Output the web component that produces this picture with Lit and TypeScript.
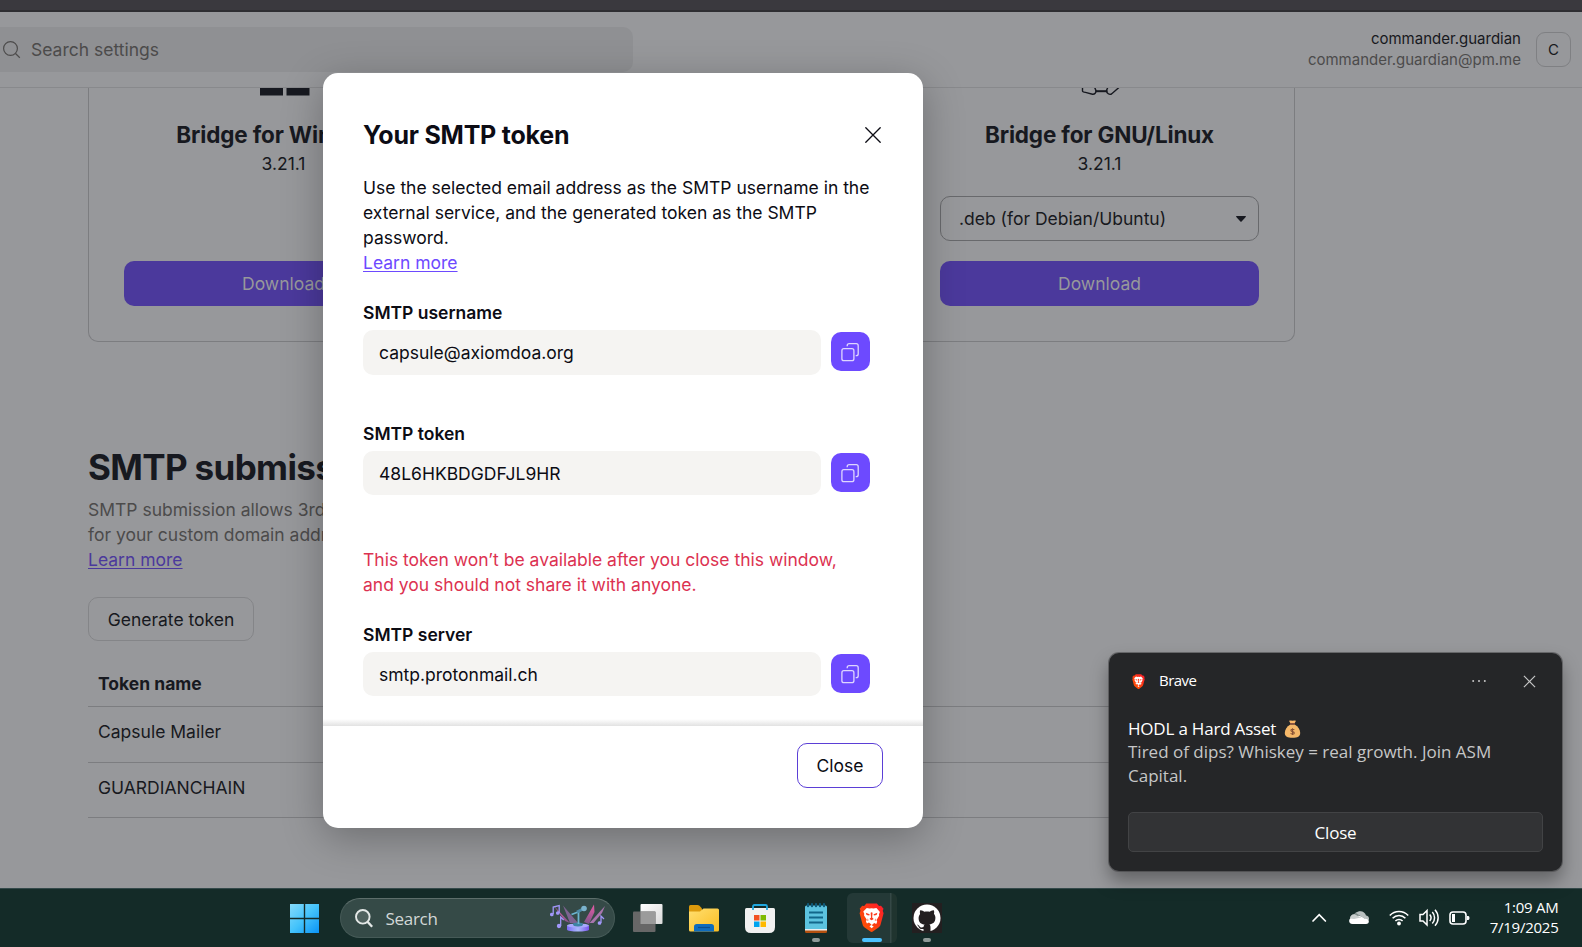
import { LitElement, html, css } from "lit";
import { customElement, property } from "lit/decorators.js";

const copyIcon = html`<svg width="39" height="39" viewBox="0 0 39 39" fill="none" stroke="#ded6ff" stroke-width="1.3">
  <rect x="10.900" y="16.700" width="12" height="12" rx="2" />
  <path d="M16.200 14.200v-.5a2 2 0 0 1 2-2h7a2 2 0 0 1 2 2v8a2 2 0 0 1-2 2h-.5" />
</svg>`;

const lionShield = (size: number) => html`<svg width=${size * 0.84} height=${size} viewBox="0 0 26 31">
  <defs><linearGradient id="g" x1="0" y1="1" x2="1" y2="0"><stop offset="0" stop-color="#ff5a00" /><stop offset=".5" stop-color="#fb3b12" /><stop offset="1" stop-color="#ff1a2e" /></linearGradient></defs>
  <path fill="url(#g)" d="M7.600.6h10.800l2.300 2.600 2-.3 2.600 3.100-.8 2 .9 2.600-3.100 11.600c-.4 1.400-1 2.200-2.100 3l-5.600 4.100c-1 .8-2.200.8-3.200 0l-5.600-4.100c-1.100-.8-1.700-1.600-2.100-3L.6 10.600l.9-2.600-.8-2 2.600-3.100 2 .3z" />
  <path fill="#fff" d="M8 5.200l3 .6 2-.4 2 .4 3-.6 3.600 4-1 2.300.2 1.800-2.700 4.200.7 2-1 2.200-2.100-1.100-2.700 2.300 2.200 1.500L13 26l-2.200-2.100 2.200-1.500-2.700-2.300-2.100 1.100-1-2.200.7-2-2.700-4.200.2-1.800-1-2.300z" />
  <path fill="#fb3a1c" d="M7 10.200l4 1.500-.4 1.100-2.800-.5zM19 10.200l-4 1.500.4 1.100 2.800-.5zM12 10l1-.4 1 .4-.4 5 1.600 1.500-2.200 1.400-2.200-1.400 1.600-1.500zM9 15.800l.8 2-1.100.7zM17 15.800l-.8 2 1.100.7z" />
</svg>`;

@customElement("copy-field")
class CopyField extends LitElement {
  @property() label = "";
  @property() value = "";
  static styles = css`
    :host { display: block; }
    .label { font-weight: 600; line-height: 25px; color: #0c0c14; }
    .row { display: flex; gap: 10px; margin-top: 5px; }
    .value { box-sizing: border-box; width: 458px; height: 44.5px; line-height: 45px; padding-left: 16px; border-radius: 10px; background: #f5f4f2; color: #0c0c14; }
    .copy { width: 39px; height: 39px; margin-top: 2px; border-radius: 10px; background: #6d4aff; display: grid; place-items: center; }
  `;
  render() {
    return html`<div class="label">${this.label}</div>
      <div class="row"><div class="value">${this.value}</div><div class="copy">${copyIcon}</div></div>`;
  }
}

@customElement("settings-page")
class SettingsPage extends LitElement {
  static styles = css`
    :host { display: block; height: 888px; overflow: hidden; background: #97989b; color: #171920; }
    .strip { height: 10px; background: #3a393e; border-bottom: 2px solid #2e2e32; }
    .header { display: flex; justify-content: space-between; height: 75px; border-bottom: 1px solid #88898c; }
    .search { display: flex; align-items: center; width: 633px; height: 45px; margin-top: 15px; background: #8f9093; border-radius: 0 10px 10px 0; color: #4c4b4b; }
    .search svg { margin: 0 10.5px 0 2.5px; }
    .user { display: flex; padding-right: 11px; margin-top: 15px; }
    .names { text-align: right; font-size: 15px; line-height: 21px; margin: 1px 15px 0 0; }
    .mail { color: #4c4b4b; }
    .avatar { box-sizing: border-box; width: 35px; height: 35px; margin-top: 5px; border: 1px solid #7f8083; border-radius: 9px; text-align: center; line-height: 34px; font-size: 15px; }
    .card { box-sizing: border-box; width: 1207px; height: 254px; margin-left: 88px; padding: 0 35px; border: 1px solid #7c7d80; border-top: 0; border-radius: 0 0 10px 10px; display: grid; grid-template-columns: repeat(3, 319px); column-gap: 89px; }
    .col { display: flex; flex-direction: column; align-items: center; height: 218px; }
    .logo { height: 32px; padding-left: 2px; }
    .name { font-size: 22.5px; font-weight: 700; line-height: 30px; letter-spacing: -0.15px; }
    .ver { line-height: 25px; margin-top: 1px; }
    .pick { box-sizing: border-box; width: 100%; height: 45px; margin-top: 20px; padding: 0 12px 0 18px; border: 1px solid #68696c; border-radius: 10px; display: flex; justify-content: space-between; align-items: center; }
    .btn { width: 100%; height: 45px; line-height: 45px; margin-top: auto; border-radius: 10px; background: #4b399c; color: #97989b; text-align: center; }
    .section { margin: 105px 0 0 88px; width: 1207px; line-height: 25px; }
    h2 { margin: 0; font-size: 35px; font-weight: 700; line-height: 41px; letter-spacing: -0.65px; }
    .muted { color: #4c4b4b; margin-top: 9px; white-space: pre; }
    .link { color: #4b399c; text-decoration: underline; text-decoration-thickness: 1px; text-underline-offset: 2px; }
    .gen { box-sizing: border-box; width: 166px; height: 44px; line-height: 43px; margin-top: 25px; border: 1px solid #848588; border-radius: 10px; text-align: center; }
    .table { margin-top: 22px; }
    .tr { box-sizing: border-box; padding-left: 10px; height: 55.5px; line-height: 50px; border-bottom: 1px solid #7c7d80; }
    .th { height: 44px; line-height: 41px; font-weight: 700; }
  `;
  render() {
    return html`
      <div class="strip"></div>
      <div class="header">
        <div class="search">
          <svg width="18" height="18" viewBox="0 0 18 18" fill="none" stroke="#4c4b4b" stroke-width="1.2"><circle cx="7.500" cy="7.500" r="6.900" /><path d="M12.500 12.500l4.300 4.200" /></svg>
          <span>Search settings</span>
        </div>
        <div class="user">
          <div class="names"><div>commander.guardian</div><div class="mail">commander.guardian@pm.me</div></div>
          <div class="avatar">C</div>
        </div>
      </div>
      <div class="card">
        <div class="col">
          <svg class="logo" width="50" height="32" viewBox="0 0 50 32"><path fill="#171920" d="M0 0h23v7.500H0zM26.500 0H49.500v7.500H26.500z" /></svg>
          <div class="name">Bridge for Windows</div>
          <div class="ver">3.21.1</div>
          <div class="btn">Download</div>
        </div>
        <div class="col"></div>
        <div class="col">
          <svg class="logo" width="40" height="32" viewBox="0 0 40 32" fill="none" stroke="#171920" stroke-width="1.4"><path d="M1.500-1v4c0 1 1.200 1.200 3 1.400l7 1.800c2.500.2 3.500-1.500 3.500-3.500L13.500-1M27-1l-1.500 3.500c0 3 3 4.500 5 3.500l8-7" /><path d="M14.500 3.200h12" stroke-width="2" /></svg>
          <div class="name">Bridge for GNU/Linux</div>
          <div class="ver">3.21.1</div>
          <div class="pick"><span>.deb (for Debian/Ubuntu)</span><svg width="10" height="6" viewBox="0 0 10 6"><path fill="#171920" d="M.5 0h9q.7.400.2 1L5.600 5.600q-.6.500-1.200 0L.3 1q-.5-.6.2-1z" /></svg></div>
          <div class="btn">Download</div>
        </div>
      </div>
      <div class="section">
        <h2>SMTP submission</h2>
        <div class="muted">SMTP submission allows 3rd-party services
for your custom domain addresses</div>
        <span class="link">Learn more</span>
        <div class="gen">Generate token</div>
        <div class="table">
          <div class="tr th">Token name</div>
          <div class="tr">Capsule Mailer</div>
          <div class="tr">GUARDIANCHAIN</div>
        </div>
      </div>`;
  }
}

@customElement("token-dialog")
class TokenDialog extends LitElement {
  static styles = css`
    :host { display: flex; flex-direction: column; box-sizing: border-box; width: 600px; height: 755px; background: #fff; color: #0c0c14; border-radius: 15px; box-shadow: 0 10px 40px rgba(0, 0, 0, 0.28); overflow: hidden; line-height: 25px; }
    .body { padding: 45px 40px 0; flex: 1; }
    .head { display: flex; justify-content: space-between; align-items: center; height: 35px; }
    h1 { margin: 0; font-size: 25px; font-weight: 700; line-height: 35px; letter-spacing: -0.22px; }
    .head svg { margin: 0 2px 2px 0; }
    p { margin: 22px 0 0; }
    .link { color: #6d4aff; text-decoration: underline; text-decoration-thickness: 1px; text-underline-offset: 2px; }
    .first { margin-top: 25px; }
    .second { margin-top: 46px; }
    .warn { color: #dc3251; margin-top: 52px; }
    .third { margin-top: 24.5px; }
    .fade { height: 7px; background: linear-gradient(#fff, #e2e2e2); }
    .foot { height: 102px; box-sizing: border-box; padding: 17px 40px 0; display: flex; justify-content: flex-end; }
    .close { box-sizing: border-box; width: 86px; height: 45px; line-height: 43px; border: 1px solid #5b3fd6; border-radius: 10px; text-align: center; }
  `;
  render() {
    return html`
      <div class="body">
        <div class="head"><h1>Your SMTP token</h1>
          <svg width="16" height="16" viewBox="0 0 16 16" stroke="#0c0c14" stroke-width="1.3" stroke-linecap="round"><path d="M.8.8l14.400 14.400M15.200.8L.8 15.200" /></svg>
        </div>
        <p>Use the selected email address as the SMTP username in the<br />external service, and the generated token as the SMTP<br />password.<br /><span class="link">Learn more</span></p>
        <copy-field class="first" label="SMTP username" value="capsule@axiomdoa.org"></copy-field>
        <copy-field class="second" label="SMTP token" value="48L6HKBDGDFJL9HR"></copy-field>
        <div class="warn">This token won’t be available after you close this window,<br />and you should not share it with anyone.</div>
        <copy-field class="third" label="SMTP server" value="smtp.protonmail.ch"></copy-field>
      </div>
      <div class="fade"></div>
      <div class="foot"><div class="close">Close</div></div>`;
  }
}

@customElement("desktop-toast")
class DesktopToast extends LitElement {
  static styles = css`
    :host { display: block; box-sizing: border-box; width: 453px; height: 218px; padding: 0 19px; border-radius: 10px; background: #252628; color: #fff; box-shadow: 0 0 0 1px rgba(60, 60, 62, 0.5), 0 10px 18px rgba(0, 0, 0, 0.35); font-family: "Open Sans", "Noto Sans", sans-serif; font-size: 17px; letter-spacing: -0.2px; }
    .top { display: flex; align-items: center; height: 55px; padding: 1px 6px 0 4px; font-size: 15px; letter-spacing: -0.55px; }
    .brand { margin: -3px 0 0 14px; flex: 1; font-weight: 500; }
    .dots { margin: -1px 37px 0 0; }
    .x { margin-right: 1px; }
    .title { display: flex; align-items: center; gap: 8px; height: 23px; margin-top: 8px; }
    .text { color: #c6c6c7; line-height: 24px; letter-spacing: 0; }
    .close { box-sizing: border-box; height: 40px; line-height: 39px; margin-top: 24px; border: 1px solid #424345; border-radius: 5px; background: #323335; text-align: center; }
  `;
  render() {
    return html`
      <div class="top">
        ${lionShield(15.5)}<span class="brand">Brave</span>
        <svg class="dots" width="14" height="4" viewBox="0 0 14 4" fill="#c6c6c7"><circle cx="1.200" cy="2" r="1" /><circle cx="7" cy="2" r="1" /><circle cx="12.800" cy="2" r="1" /></svg>
        <svg class="x" width="13" height="13" viewBox="0 0 14 14" stroke="#c6c6c7" stroke-width="1.3"><path d="M1 1l12 12M13 1L1 13" /></svg>
      </div>
      <div class="title"><span>HODL a Hard Asset</span>
        <svg width="17" height="18" viewBox="0 0 17 18"><path fill="#fbb969" d="M5 .8q1.500-.8 3.500 0 2-.8 3.500 0L10.500 3.500h-4z" /><path fill="#8a4b3c" d="M6 3.200h5v1.500H6z" /><path fill="#f5b869" d="M6 4.700h5c3 1.800 5.200 5 5.200 8.300 0 3.400-2.700 4.800-7.700 4.800S.8 16.400.8 13C.8 9.700 3 6.500 6 4.700z" /><path fill="none" stroke="#8a5335" stroke-width="1.1" d="M10.300 10c-.9-1.200-3.500-.8-3.400.5.100 1.400 3.400.9 3.400 2.500 0 1.500-2.800 1.600-3.700.3M8.500 8.300V15" /></svg>
      </div>
      <div class="text">Tired of dips? Whiskey = real growth. Join ASM<br />Capital.</div>
      <div class="close">Close</div>`;
  }
}

@customElement("task-bar")
class TaskBar extends LitElement {
  static styles = css`
    :host { display: flex; box-sizing: border-box; height: 59px; border-top: 1px solid #34494a; background: #142b28; padding-left: 290px; color: #fff; font-family: "Open Sans", "Noto Sans", sans-serif; }
    svg { display: block; flex: none; }
    .start { margin: 15px 21px 0 0; }
    .search { box-sizing: border-box; display: flex; align-items: center; width: 275px; height: 40px; margin-top: 9px; padding: 0 8px 0 14px; border: 1px solid #465a57; border-top-color: #5d6e6b; border-radius: 20px; background: #354a47; color: #d3d8d7; font-size: 17px; letter-spacing: -0.3px; }
    .search span { margin-left: 12.5px; flex: 1; }
    .slot { display: flex; flex-direction: column; align-items: center; width: 56px; box-sizing: border-box; padding-top: 14px; }
    .slots { display: flex; margin-left: 5px; }
    .dot { width: 8px; height: 4px; border-radius: 2px; background: #8f9a98; margin-top: 5px; }
    .on { width: 20px; background: #4cc2ff; }
    .tile { width: 50px; height: 50px; margin: 4px 3px 0; padding-top: 10px; border-radius: 6px; background: linear-gradient(90deg, #243937 43px, #354846 43px, #354846 44px, #20342f 45px); }
    .last { margin-left: -1px; }
    .tray { display: flex; margin-left: auto; padding-right: 23.5px; }
    .clock { font-size: 15px; line-height: 20px; letter-spacing: -0.25px; margin: 8px 0 0 18px; width: 69.5px; white-space: nowrap; display: flex; flex-direction: column; align-items: flex-end; }
  `;
  render() {
    return html`
      <svg class="start" width="29" height="29" viewBox="0 0 29 29"><defs><linearGradient id="w" gradientUnits="userSpaceOnUse" x1="0" y1="0" x2="29" y2="29"><stop offset="0" stop-color="#86dbfb" /><stop offset=".5" stop-color="#44c3fb" /><stop offset="1" stop-color="#0a93f5" /></linearGradient></defs><path fill="url(#w)" d="M0 0h13.800v13.800H0zM15.200 0H29v13.800H15.200zM0 15.200h13.800V29H0zM15.200 15.200H29V29H15.200z" /></svg>
      <div class="search">
        <svg width="18" height="19" viewBox="0 0 18 19" fill="#50625f" stroke="#e4e8e7" stroke-width="1.9"><circle cx="7.800" cy="7.800" r="6.800" /><path d="M12.500 12.800l4.700 5" stroke-width="2.4" /></svg>
        <span>Search</span>
        <svg width="56" height="28" viewBox="0 0 56 28">
          <defs><linearGradient id="a" x1="0" y1="0" x2="0" y2="1"><stop offset="0" stop-color="#e85ba8" /><stop offset="1" stop-color="#7d5487" /></linearGradient><linearGradient id="b" x1="0" y1="0" x2="1" y2="0"><stop offset="0" stop-color="#7c6bf5" /><stop offset=".5" stop-color="#a9b8fb" /><stop offset="1" stop-color="#7b55ee" /></linearGradient></defs>
          <path fill="#7d6290" d="M13 1.500L28 19h-8z" /><path fill="url(#a)" d="M4 2l16 17-5-2zM44 .500L34 18l5 2 5.500-12z" /><path fill="#a975ad" d="M55 2L39.500 19h4L52 9z" />
          <path fill="url(#b)" d="M17 21.500v4c0 2.800 22 2.800 22 0v-4z" /><ellipse cx="28" cy="21.500" rx="11" ry="2" fill="#a8a8fc" />
          <ellipse cx="28" cy="20.500" rx="5" ry="1.900" fill="#3d83a3" /><path stroke="#6cb5d0" stroke-width="1.8" d="M28.500 20V8.500M21.500 10.500l8-3" fill="none" /><path stroke="#4b89a5" stroke-width="3" d="M27 8l5-2.500" /><circle cx="34" cy="4.500" r="2.800" fill="#7bb3cd" />
          <g fill="#a297fa" stroke="#a297fa" stroke-width="1.3"><circle cx="1.800" cy="10.500" r="1.200" /><circle cx="7.800" cy="9" r="1.200" /><path fill="none" d="M3.200 10V3l6-1.500V9" /><circle cx="9" cy="22" r="1.500" /><path fill="none" d="M10.700 22v-9l3 3" /><circle cx="49.500" cy="19" r="1.200" /><path fill="none" d="M51 19v-7l3 3" /></g>
        </svg>
      </div>
      <div class="slots">
        <div class="slot"><svg width="30" height="30" viewBox="0 0 30 30"><defs><linearGradient id="t" x2="1" y2="1"><stop stop-color="#fff" /><stop offset="1" stop-color="#d9d9d9" /></linearGradient></defs><rect x="7.500" y="1" width="22" height="20" rx="1" fill="url(#t)" /><rect x="0" y="8.500" width="22.500" height="20.500" rx="1" fill="#676767" /><path fill="#9b9b9b" d="M7.500 8.500h15V21h-15z" /></svg></div>
        <div class="slot"><svg width="30" height="30" viewBox="0 0 30 30"><defs><linearGradient id="f" x2="1" y2="1"><stop stop-color="#ffdf70" /><stop offset="1" stop-color="#fbbd22" /></linearGradient></defs><path fill="#dc9a0c" d="M0 3.500Q0 2 1.500 2h7q1 0 2 .8L13 5.500V9H0z" /><path fill="url(#f)" d="M0 8.500h11l3.500-3h14Q30 5.500 30 7v20q0 1.500-1.500 1.500h-27Q0 28.500 0 27z" /><path fill="#0f6cbd" d="M5 28.500v-4.700q0-2.800 2.800-2.800h14.400q2.800 0 2.800 2.800v4.700z" /><path stroke="#0a4e8f" stroke-width="1.2" d="M9 24.500h12" /></svg></div>
        <div class="slot"><svg width="30" height="30" viewBox="0 0 30 30"><path fill="none" stroke="#20a8e0" stroke-width="1.8" d="M8 6V3.500Q8 2 9.500 2h11Q22 2 22 3.500V6" /><path fill="#f1f1f1" d="M0 6.500Q0 5 1.500 5h27Q30 5 30 6.500V24q0 6-6 6H6q-6 0-6-6z" /><path fill="none" stroke="#20a8e0" stroke-width="1.8" d="M8 5v2M22 5v2" /><path fill="#f25022" d="M9 12h5.500v5.500H9z" /><path fill="#7fba00" d="M15.500 12H21v5.500h-5.500z" /><path fill="#00a4ef" d="M9 18.500h5.500V24H9z" /><path fill="#ffb900" d="M15.500 18.500H21V24h-5.500z" /></svg></div>
        <div class="slot"><svg width="24" height="30" viewBox="0 0 24 30"><path fill="#b4500f" d="M1 24h22v4.500q0 1.500-1.500 1.500h-19Q1 30 1 28.500z" /><path fill="#e9eef0" d="M1 24h22v3.500H1z" /><path fill="#5cc3df" d="M1 4q0-1.500 1.500-1.500h19Q23 2.500 23 4v22H1z" /><path stroke="#0f5a7a" stroke-width="2.2" d="M4 1.200v2M8 1.200v2M12 1.200v2M16 1.200v2M20 1.200v2" stroke-linecap="round" /><path stroke="#12678a" stroke-width="1.8" d="M5 9.500h14M5 14.500h14M5 19.500h14" /></svg><div class="dot"></div></div>
        <div class="slot tile">${lionShield(30)}<div class="dot on"></div></div>
        <div class="slot last"><svg width="30" height="30" viewBox="0 0 30 30"><path fill="#231f20" d="M0 0h30v30H0z" /><circle cx="15" cy="15" r="13.500" fill="#fff" /><path fill="#231f20" d="M8.200 7.200c1.500-.2 3 .6 4.200 1.500 1.700-.4 3.500-.4 5.200 0 1.200-.9 2.700-1.700 4.200-1.500.5 1.200.5 2.500.1 3.600 1 1.200 1.500 2.500 1.500 4 0 4.700-2.600 6.200-6 6.700.8.800 1.100 1.700 1.100 3v4.600h-7v-3.200c-3 .6-4.200-.8-4.800-2-.5-1.200-1.100-1.700-1.800-2.200 2.400-.2 2.500 2.700 4.600 2.800.8 0 1.500-.2 2-.4.100-1 .5-1.900 1.100-2.500-3.400-.5-6-2-6-6.700 0-1.500.5-2.800 1.500-4-.4-1.200-.4-2.500.1-3.700z" /></svg><div class="dot"></div></div>
      </div>
      <div class="tray">
        <svg width="160" height="58" viewBox="1311 889 160 58" fill="none" stroke="#fff" stroke-width="1.7">
          <path d="M1313 921l6.200-6.300 6.200 6.300" stroke-linecap="round" />
          <g stroke="none"><path fill="#7f8d8b" d="M1350 919c0-3 2-4.500 4-4.500 1.500-3.500 8-4 10-.5z" /><path fill="#b9c1c0" d="M1356 913c4-3.500 9-1.500 10 2.500 3 0 4 4 2 5.500z" /><path fill="#fff" d="M1352.500 924c-4.500 0-4.500-6.500.5-6.500l5-1.500c3-1 5 2.500 7 2.700 5 0 5 5.300 1 5.300z" /><path fill="#c9cfce" d="M1350 918.500c0-3 3-5 5.500-3.800l8.500 4.300-3-1.500-7 1.500z" /></g>
          <path d="M1389.800 915.500c5-5.300 13.400-5.300 18.400 0M1392.600 918.300c3.500-3.700 9.300-3.700 12.800 0M1395.400 921c2-2 5.200-2 7.200 0" stroke-width="1.6" /><circle cx="1399" cy="923.500" r="1.900" fill="#fff" stroke="none" />
          <path d="M1420 914.500h3l4-4v14.500l-4-4h-3zM1429.700 914.500c1.700 2 1.700 4.500 0 6.500M1432.300 912c3 3.400 3 8.100 0 11.500M1435 909.700c4.200 4.700 4.200 11.400 0 16" stroke-width="1.5" />
          <rect x="1450" y="912" width="16" height="12" rx="3" stroke-width="1.6" /><path fill="#fff" stroke="none" d="M1452 914h3v8h-3zM1467 916h1.500q1 .5 1 2t-1 2h-1.500z" />
        </svg>
        <div class="clock"><span>1:09 AM</span><span>7/19/2025</span></div>
      </div>`;
  }
}

@customElement("app-root")
class AppRoot extends LitElement {
  static styles = css`
    :host { display: block; position: relative; width: 1582px; height: 947px; overflow: hidden; font-family: Inter, sans-serif; font-size: 17.5px; }
    token-dialog { position: absolute; left: 323px; top: 73px; }
    desktop-toast { position: absolute; left: 1109px; top: 653px; }
  `;
  render() {
    return html`<settings-page></settings-page><task-bar></task-bar><token-dialog></token-dialog><desktop-toast></desktop-toast>`;
  }
}
